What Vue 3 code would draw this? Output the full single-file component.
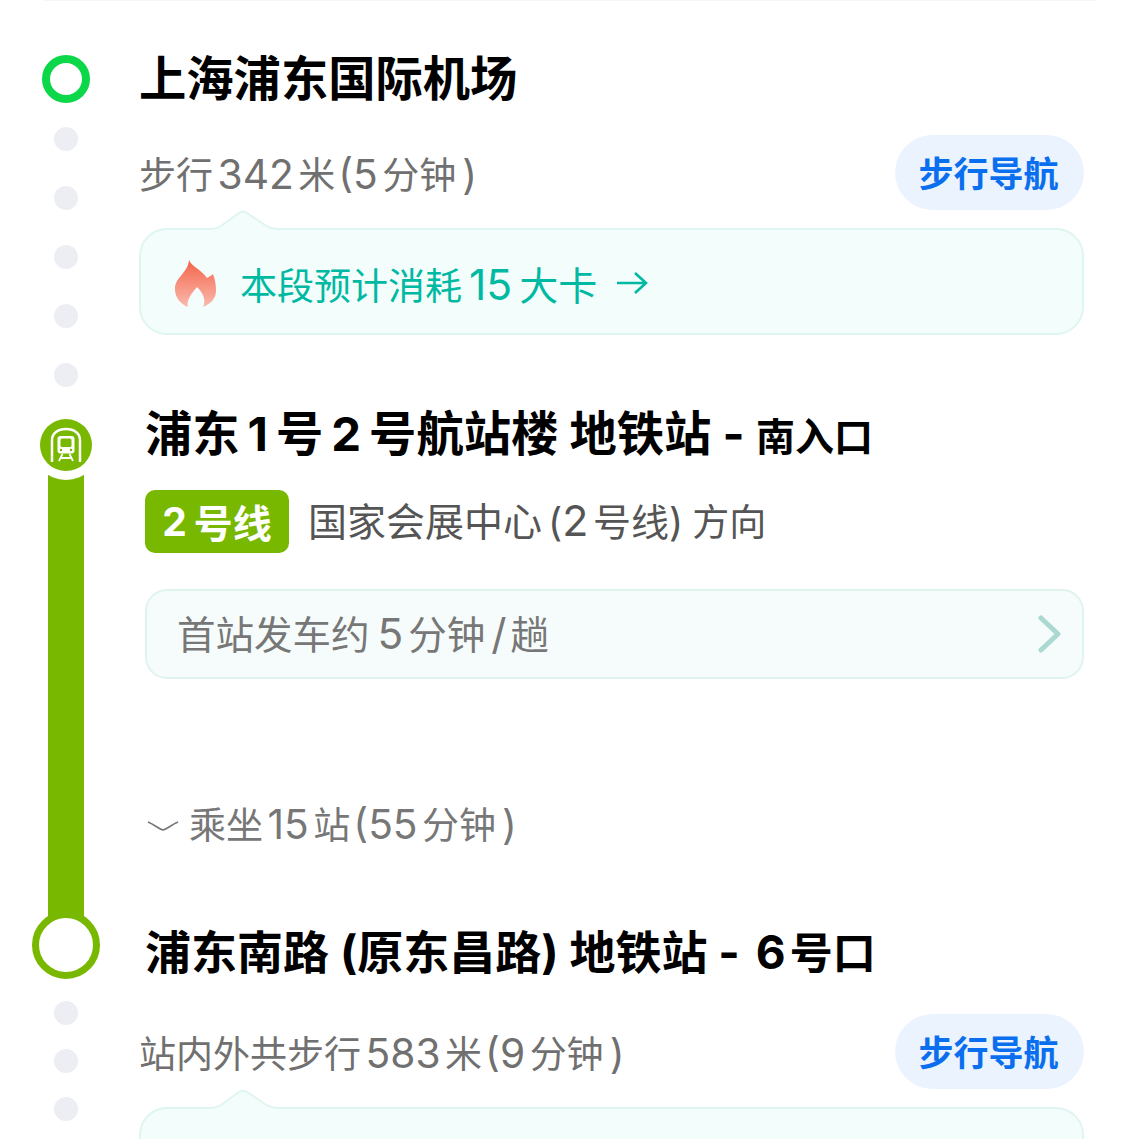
<script setup>
const railDots = [1, 2, 3, 4, 5]
const lowerDots = [1, 2, 3]
</script>

<template>
  <div class="page">
    <!-- walk to station -->
    <section class="segment first">
      <div class="rail rail-walk">
        <span class="start-ring"></span>
        <span v-for="d in railDots" :key="d" class="dot"></span>
      </div>
      <div class="body">
        <h2 class="stop-name">上海浦东国际机场</h2>
        <div class="walk-row">
          <span class="walk-text">步行<i class="n">342</i>米<i class="p open">(</i><i class="n tight">5</i>分钟<i class="p close">)</i></span>
          <button class="nav-btn">步行导航</button>
        </div>
        <div class="cal-card">
          <svg class="notch" width="70" height="21" viewBox="0 0 70 21">
            <path d="M0 21V19C6 19 9 18 12 16L30 3Q34 .5 38 3L56 15C60 18 64 19 70 19V21Z" fill="#f3fdfc" />
            <path d="M0 19C6 19 9 18 12 16L30 3Q34 .5 38 3L56 15C60 18 64 19 70 19" fill="none" stroke="#dff5f1" stroke-width="2" />
          </svg>
          <svg class="flame" width="43" height="49" viewBox="0 0 43 49">
            <defs>
              <linearGradient id="flameFill" x1="0" y1="0" x2="0" y2="1">
                <stop offset="0" stop-color="#f4634a" />
                <stop offset="1" stop-color="#f9bbad" />
              </linearGradient>
            </defs>
            <path d="M15 1C18 8 27 10 33 19C35 18 38 16 39 15C41 20 42 26 42 32C42 40 36 45 29 48C32 42 30 35 23 28C18 34 12 41 14 48C6 45 1 38 1 30C1 18 14 14 15 1Z" fill="url(#flameFill)" />
          </svg>
          <span class="cal-text">本段预计消耗<i class="n">15</i><span class="cal-end">大卡</span></span>
          <svg class="cal-arrow" width="34" height="26" viewBox="0 0 34 26">
            <path d="M2 13H31M20 3L31 13L20 23" fill="none" stroke="#00b9a2" stroke-width="2.6" />
          </svg>
        </div>
      </div>
    </section>

    <!-- metro ride -->
    <section class="segment ride">
      <div class="rail rail-ride">
        <span class="metro-icon">
          <svg width="52" height="52" viewBox="0 0 52 52">
            <path d="M12 43V21C12 14 18 10 26 10C34 10 40 14 40 21V43" fill="none" stroke="#fff" stroke-width="2.5" />
            <rect x="17.5" y="17" width="17" height="17.5" rx="3" fill="#fff" />
            <rect x="20.5" y="19.5" width="11" height="8.5" rx="1.5" fill="#78b800" />
            <circle cx="21" cy="31" r="1.2" fill="#78b800" />
            <circle cx="31" cy="31" r="1.2" fill="#78b800" />
            <path d="M22.5 35L19 42M29.5 35L33 42M20.5 39H31.5" fill="none" stroke="#fff" stroke-width="1.8" />
          </svg>
        </span>
        <span class="line-bar"></span>
        <span class="end-ring"></span>
      </div>
      <div class="body body-ride">
        <h2 class="stop-name">浦东<i class="wide">1</i>号<i class="wide">2</i>号航站楼 地铁站 - <small>南入口</small></h2>
        <div class="line-row">
          <span class="line-tag"><i class="tag-n">2</i>号线</span>
          <span class="direction">国家会展中心<i class="dir-open">(</i><i class="n tight">2</i><span class="dir-line">号线</span>)<span class="dir-end">方向</span></span>
        </div>
        <div class="freq-box">
          <span class="freq-text">首站发车约<i class="n freq-n">5</i>分钟<i class="n slash">/</i>趟</span>
          <svg width="24" height="38" viewBox="0 0 24 38">
            <path d="M3 3L20 19L3 35" fill="none" stroke="#abd9d2" stroke-width="5" stroke-linecap="round" stroke-linejoin="round" />
          </svg>
        </div>
        <div class="ride-row">
          <svg class="ride-chevron" width="32" height="12" viewBox="0 0 32 12">
            <path d="M1 2C8 5 12 9 16 10C20 9 24 5 31 2" fill="none" stroke="#777" stroke-width="1.8" />
          </svg>
          <span>乘坐<i class="n">15</i>站<i class="p open">(</i><i class="n tight">55</i>分钟<i class="p close">)</i></span>
        </div>
        <h2 class="stop-name last-stop">浦东南路 (原东昌路) 地铁站 - <i class="six">6</i><small class="exit">号口</small></h2>
      </div>
    </section>

    <!-- walk out of station -->
    <section class="segment third">
      <div class="rail rail-lower">
        <span v-for="d in lowerDots" :key="d" class="dot"></span>
      </div>
      <div class="body body-lower">
        <div class="walk-row">
          <span class="walk-text">站内外共步行<i class="n">583</i>米<i class="p open">(</i><i class="n tight">9</i>分钟<i class="p close">)</i></span>
          <button class="nav-btn">步行导航</button>
        </div>
        <div class="cal-card">
          <svg class="notch" width="70" height="21" viewBox="0 0 70 21">
            <path d="M0 21V19C6 19 9 18 12 16L30 3Q34 .5 38 3L56 15C60 18 64 19 70 19V21Z" fill="#f3fdfc" />
            <path d="M0 19C6 19 9 18 12 16L30 3Q34 .5 38 3L56 15C60 18 64 19 70 19" fill="none" stroke="#dff5f1" stroke-width="2" />
          </svg>
        </div>
      </div>
    </section>
  </div>
</template>

<style scoped>
.page {
  height: 1139px;
  overflow: hidden;
  background: #fff;
  font-family: Inter, "Noto Sans CJK SC", sans-serif;
  color: #000;
  position: relative;
}
.page::before {
  content: "";
  display: block;
  height: 1px;
  margin: 0 44px;
  background: #f6f6f6;
}
i {
  font-style: normal;
}
.n {
  margin: 0 4.5px;
  font-size: 1.1em;
  line-height: 1;
}
.tight {
  margin-left: 0;
}
.p {
  font-size: 1.1em;
  line-height: 1;
}
.open {
  margin-left: 3px;
}
.close {
  margin-left: 6px;
}
.wide {
  margin: 0 8px;
}
.six {
  margin: 0 4px 0 5px;
}
.segment {
  display: grid;
  grid-template-columns: 132px 1fr;
  padding-right: 55px;
}
.first {
  height: 404px;
}
.ride {
  height: 578px;
}
.rail {
  display: flex;
  flex-direction: column;
  align-items: center;
}
.rail-walk {
  padding-top: 54px;
  gap: 35px;
}
.start-ring {
  width: 48px;
  height: 48px;
  box-sizing: border-box;
  border: 8px solid #0bd748;
  border-radius: 50%;
  margin-bottom: -11px;
}
.dot {
  width: 24px;
  height: 24px;
  border-radius: 50%;
  background: #edeef3;
  flex: none;
}
.rail-ride {
  padding-top: 14px;
  height: 560px;
}
.metro-icon {
  position: relative;
  z-index: 1;
  width: 52px;
  height: 52px;
  flex: none;
  border-radius: 50%;
  background: #78b800;
  box-shadow: 0 0 0 9px #fff;
}
.metro-icon svg {
  display: block;
}
.line-bar {
  width: 36px;
  flex: 1;
  margin-top: -20px;
  background: #78b800;
}
.end-ring {
  position: relative;
  width: 68px;
  height: 68px;
  flex: none;
  box-sizing: border-box;
  margin: -10px 1px 0 0;
  border: 7px solid #78b800;
  border-radius: 50%;
  background: #fff;
}
.rail-lower {
  padding-top: 18px;
  gap: 24px;
}
.body {
  padding-left: 7px;
  min-width: 0;
}
.first .body {
  padding-top: 48px;
}
.stop-name {
  margin: 0;
  font-size: 47.3px;
  line-height: 60px;
  font-weight: 700;
  white-space: nowrap;
}
.stop-name small {
  font-size: 39px;
  font-weight: 600;
}
.stop-name .exit {
  font-size: 43px;
}
.walk-row {
  display: flex;
  align-items: center;
  justify-content: space-between;
  margin-top: 26px;
}
.walk-text {
  padding-top: 6px;
  font-size: 37px;
  line-height: 50px;
  color: #707070;
  white-space: nowrap;
}
.nav-btn {
  width: 189px;
  height: 75px;
  padding: 0 2px 2px 0;
  border: none;
  border-radius: 38px;
  background: #ebf3fe;
  color: #0a6fee;
  font: 600 35px Inter, "Noto Sans CJK SC", sans-serif;
}
.cal-card {
  position: relative;
  display: flex;
  align-items: center;
  height: 107px;
  box-sizing: border-box;
  margin-top: 18px;
  padding: 3px 0 0 33px;
  border: 2px solid #dff5f1;
  border-radius: 28px;
  background: #f3fdfc;
}
.notch {
  position: absolute;
  left: 68px;
  top: -20px;
}
.flame {
  flex: none;
}
.cal-text {
  margin-left: 23px;
  font-size: 37px;
  color: #00b9a2;
  white-space: nowrap;
}
.cal-text .n {
  margin: 0 7px;
  font-size: 1.15em;
}
.cal-end {
  font-size: 39px;
}
.cal-arrow {
  margin-left: 18px;
}
.body-ride {
  margin-top: -1px;
  padding-left: 13px;
}
.line-row {
  display: flex;
  align-items: center;
  margin-top: 23px;
}
.line-tag {
  display: flex;
  align-items: center;
  justify-content: center;
  width: 144px;
  height: 63px;
  padding-bottom: 1px;
  box-sizing: border-box;
  border-radius: 10px;
  background: #78b800;
  color: #fff;
  font-size: 39px;
  font-weight: 700;
}
.tag-n {
  margin-right: 7px;
}
.direction {
  margin: 0 0 6px 19px;
  font-size: 39px;
  color: #555;
  white-space: nowrap;
}
.dir-open {
  margin-left: 6px;
}
.dir-line {
  font-size: 38px;
}
.dir-end {
  margin-left: 9px;
  font-size: 37px;
}
.freq-box {
  display: flex;
  align-items: center;
  justify-content: space-between;
  height: 90px;
  box-sizing: border-box;
  margin-top: 36px;
  padding: 0 20px 0 30px;
  border: 2px solid #e0f3ef;
  border-radius: 22px;
  background: #f6fcfb;
  font-size: 38.5px;
  color: #777;
}
.freq-text {
  margin-bottom: 4px;
}
.freq-n {
  margin: 0 5px 0 8px;
}
.slash {
  margin: 0 4px 0 6px;
}
.ride-row {
  display: flex;
  align-items: center;
  gap: 10px;
  height: 50px;
  margin-top: 119px;
  padding-left: 2px;
  font-size: 37px;
  color: #777;
  white-space: nowrap;
}
.ride-chevron {
  margin-top: 6px;
}
.last-stop {
  margin-top: 74px;
  font-size: 46px;
}
.body-lower .walk-row {
  margin-top: 31px;
}
</style>

<style>
html,
body {
  margin: 0;
  background: #fff;
}
</style>
